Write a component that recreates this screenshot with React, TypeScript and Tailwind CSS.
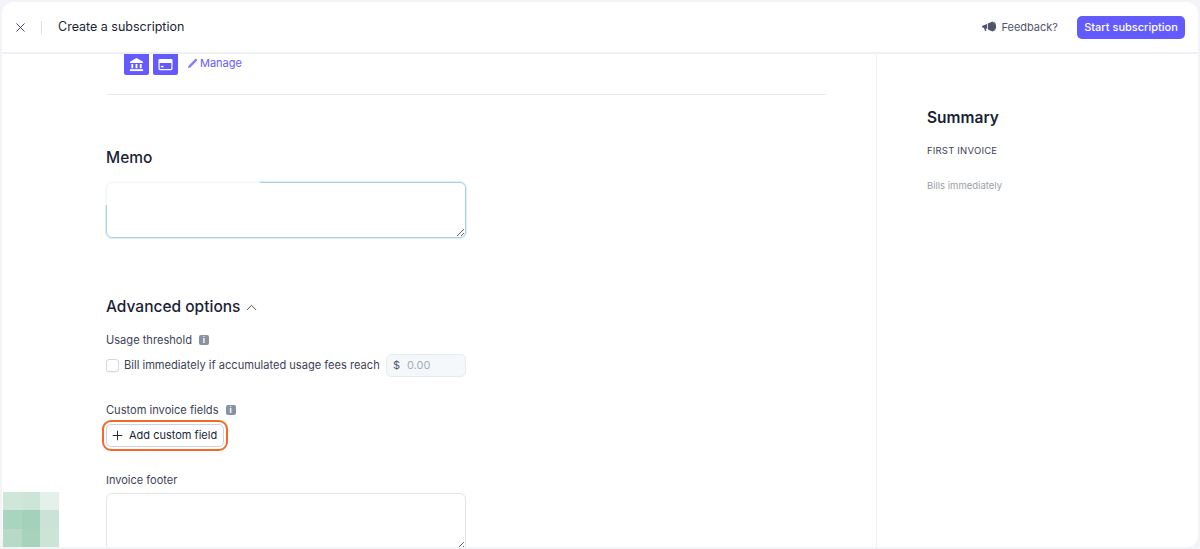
import { ChevronUp, Pencil, Plus, X } from "lucide-react";

const cells = ["#cfe6da", "#cde5d9", "#e4f0ea", "#a9d4bd", "#a4d1b9", "#cbe3d7", "#b6dac6", "#a7d3bb", "#cbe4d7"];

const Info = () => (
    <span className="inline-flex items-center justify-center w-[10px] h-[10px] rounded-[2px] bg-[#8792a2] text-white text-[8px] font-bold leading-none">i</span>
);

const BankIcon = () => (
    <svg width="15" height="15" viewBox="0 0 16 16" fill="white">
        <path d="M8 1 L15 5 V6.5 H1 V5 Z" />
        <rect x="2.5" y="7.5" width="2" height="4.5" />
        <rect x="7" y="7.5" width="2" height="4.5" />
        <rect x="11.5" y="7.5" width="2" height="4.5" />
        <rect x="1" y="13" width="14" height="2" />
    </svg>
);

const CardIcon = () => (
    <svg width="15" height="15" viewBox="0 0 16 16" fill="white">
        <path fillRule="evenodd" d="M2 2 H14 A1.5 1.5 0 0 1 15.5 3.5 V12.5 A1.5 1.5 0 0 1 14 14 H2 A1.5 1.5 0 0 1 .5 12.5 V3.5 A1.5 1.5 0 0 1 2 2 Z M1.8 6.5 V12 A.7 .7 0 0 0 2.5 12.7 H13.5 A.7 .7 0 0 0 14.2 12 V6.5 Z" />
        <rect x="3" y="9.5" width="3" height="1.5" />
    </svg>
);

const FeedbackIcon = () => (
    <svg width="14" height="12" viewBox="0 0 14 12" fill="#4f566b">
        <path d="M0 5 L5 3 V8 L3.6 7.5 L4.4 10 H3 L2 7 L0 6.3 Z" />
        <path d="M5.8 2.6 L10.6 .4 A6 6 0 0 1 10.6 10.6 L5.8 8.4 Z" />
        <path d="M11.6 .6 A1.6 5 0 0 1 11.6 10.4 A3 5 0 0 0 11.6 .6 Z" />
    </svg>
);

const App = () => {
    return (
        <div className="relative w-[1200px] h-[549px] overflow-hidden bg-[#f3f4f8] p-[2px] font-['Inter',sans-serif] text-[#1a1f36]">
            <div className="flex flex-col h-full rounded-xl overflow-hidden bg-white">
                <header className="flex items-center justify-between h-[52px] shrink-0 border-b-2 border-[#eff0f3] pl-[11px] pr-[13px]">
                    <div className="flex items-center">
                        <X size={15} strokeWidth={1.5} className="text-[#3c4257]" />
                        <span className="w-px h-[13px] bg-[#dcdfe5] ml-[13px] mr-[16px]" />
                        <span className="text-[12.5px] leading-none">Create a subscription</span>
                    </div>
                    <div className="flex items-center">
                        <FeedbackIcon />
                        <span className="text-[11px] leading-none pt-px text-[#4f566b] ml-[5px] mr-[19px]">Feedback?</span>
                        <button className="h-[23px] w-[108px] rounded-[5px] bg-[#635bff] text-white text-[11px] font-medium leading-none">Start subscription</button>
                    </div>
                </header>

                <div className="flex flex-1 min-h-0">
                    <main className="w-[874px] shrink-0 pl-[104px] overflow-hidden">
                        <div className="w-[720px] h-[41px] border-b border-[#e9ebf0] pl-[18px] flex items-start gap-[4px]">
                            <span className="flex items-center justify-center w-[25px] h-[21px] rounded-b-[2px] bg-[#635bff]"><BankIcon /></span>
                            <span className="flex items-center justify-center w-[25px] h-[21px] rounded-b-[2px] bg-[#635bff]"><CardIcon /></span>
                            <span className="flex items-center ml-[5px] h-[18px] text-[11px] text-[#635bff]">
                                <Pencil size={11} strokeWidth={0} className="fill-[#8780ff] mr-[2px]" />
                                Manage
                            </span>
                        </div>

                        <h2 className="mt-[53px] text-[15.5px] leading-5 font-medium">Memo</h2>
                        <div className="relative mt-[14px] w-[360px] h-[56px]">
                            <textarea className="block w-full h-full resize-y rounded-[6px] border border-[#a9cfe9] bg-white shadow-[0_0_0_1px_#e0eef8] outline-none"></textarea>
                            <div className="absolute left-[-2px] top-[-1px] w-[156px] h-[24px] bg-white/80"></div>
                        </div>

                        <div className="mt-[59px] flex items-center gap-[3px]">
                            <h2 className="text-[15.5px] leading-5 font-medium">Advanced options</h2>
                            <ChevronUp size={17} strokeWidth={1.3} className="text-[#3c4257]" />
                        </div>

                        <div className="mt-[15px] flex items-center gap-[7px] h-[16px]">
                            <span className="text-[11.1px] text-[#3c4257]">Usage threshold</span>
                            <Info />
                        </div>
                        <div className="mt-[6px] flex items-center h-[23px] w-[360px]">
                            <span className="block w-[13px] h-[13px] rounded-[3px] border border-[#d5d8df] bg-white shadow-[0_1px_1px_#0000000d]"></span>
                            <span className="ml-[5px] text-[11.1px] text-[#3c4257] whitespace-nowrap">Bill immediately if accumulated usage fees reach</span>
                            <span className="ml-auto flex items-center w-[80px] h-[23px] pl-[6px] rounded-[5px] border border-[#e6ebef] bg-[#f5f8fa] text-[11px]">
                                <span className="text-[#4f566b]">$</span>
                                <span className="ml-[7px] text-[#a3acb9]">0.00</span>
                            </span>
                        </div>

                        <div className="mt-[25px] flex items-center gap-[7px] h-[16px]">
                            <span className="text-[11.1px] text-[#3c4257]">Custom invoice fields</span>
                            <Info />
                        </div>
                        <button className="mt-[6px] flex items-center w-[118px] h-[23px] pl-[3px] rounded-[5px] bg-white border border-[#c9d3e2] ring-[2px] ring-white outline-2 outline-offset-[2px] outline-[#f4692a] text-[11px] text-[#1a1f36] whitespace-nowrap">
                            <Plus size={15} strokeWidth={1.5} className="mr-[4px]" />
                            Add custom field
                        </button>

                        <div className="mt-[25px] h-[16px] flex items-center text-[11px] text-[#3c4257]">Invoice footer</div>
                        <textarea className="mt-[5px] block w-[360px] h-[58px] resize-y rounded-[6px] border border-[#e3e5ea] bg-white outline-none"></textarea>
                    </main>

                    <aside className="flex-1 border-l border-[#eff0f3] pl-[50px] pt-[54px]">
                        <h2 className="text-[15.5px] leading-5 font-semibold">Summary</h2>
                        <div className="mt-[17px] text-[9.5px] leading-3 tracking-[0.2px] text-[#3c4257]">FIRST INVOICE</div>
                        <div className="mt-[23px] text-[9.5px] leading-3 text-[#9a9fa8]">Bills immediately</div>
                    </aside>
                </div>
            </div>

            <div className="absolute left-[3px] top-[492px] grid grid-cols-3 w-[56px] h-[55px]">
                {cells.map((c, i) => <span key={i} style={{ backgroundColor: c }} />)}
            </div>
        </div>
    );
}

export default App;
